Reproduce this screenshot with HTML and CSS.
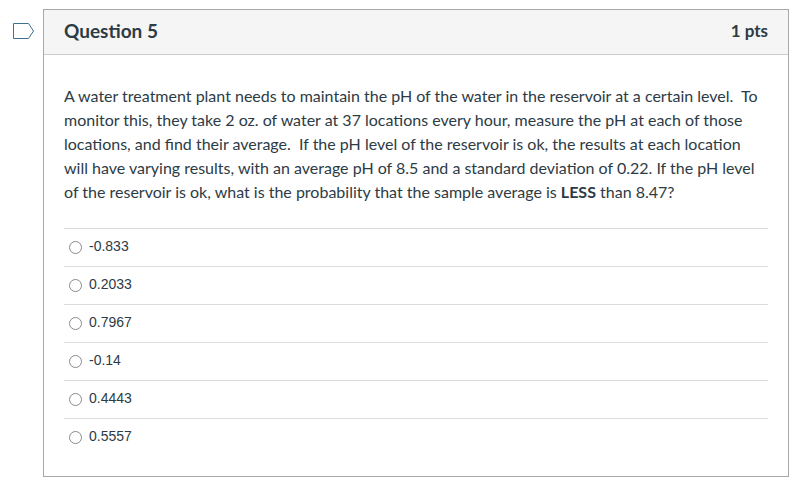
FILE: index.html
```html
<!DOCTYPE html>
<html>
<head>
<meta charset="utf-8">
<link rel="stylesheet" href="styles.css">
</head>
<body>
<div class="page">
  <div class="flag">
    <svg width="22" height="16" viewBox="0 0 22 16"><path d="M0.5 0.5 H15.5 L20.5 8 L15.5 15.5 H0.5 Z" fill="none" stroke="#3f6f8f" stroke-width="1"/></svg>
  </div>
  <div class="question">
    <div class="header">
      <span class="title">Question 5</span>
      <span class="pts">1 pts</span>
    </div>
    <div class="content">
      <p class="text">A water treatment plant needs to maintain the pH of the water in the reservoir at a certain level.&nbsp; To monitor this, they take 2 oz. of water at 37 locations every hour, measure the pH at each of those locations, and find their average.&nbsp; If the pH level of the reservoir is ok, the results at each location will have varying results, with an average pH of 8.5 and a standard deviation of 0.22. If the pH level of the reservoir is ok, what is the probability that the sample average is <strong>LESS</strong> than 8.47?</p>
      <div class="answers">
        <label class="answer"><span class="radio"></span><span class="val">-0.833</span></label>
        <label class="answer"><span class="radio"></span><span class="val">0.2033</span></label>
        <label class="answer"><span class="radio"></span><span class="val">0.7967</span></label>
        <label class="answer"><span class="radio"></span><span class="val">-0.14</span></label>
        <label class="answer"><span class="radio"></span><span class="val">0.4443</span></label>
        <label class="answer"><span class="radio"></span><span class="val">0.5557</span></label>
      </div>
    </div>
  </div>
</div>
</body>
</html>
```
FILE: styles.css
```css
html, body { margin: 0; padding: 0; background: #fff; }
body { font-family: Lato, "Open Sans", sans-serif; color: #2d3b45; }
.page { display: flex; align-items: flex-start; padding-top: 9px; }
.flag { width: 43px; padding-top: 14px; padding-left: 13px; box-sizing: border-box; flex: none; }
.flag svg { display: block; }
.question { width: 746px; border: 1px solid #a8a8a8; box-sizing: border-box; }
.header { display: flex; justify-content: space-between; align-items: center; height: 41px; padding: 0 20px 3px; background: #f5f5f5; border-bottom: 1px solid #c7cdd1; box-sizing: content-box; }
.title { font-weight: 700; font-size: 19px; color: #2d3b45; }
.pts { font-weight: 700; font-size: 17px; color: #2d3b45; }
.content { padding: 29px 20px 20px; }
.text { margin: 0 0 24px; font-size: 16px; line-height: 24px; }
.answers { border-top: 1px solid #dcdcdc; }
.answer { display: flex; align-items: center; height: 34px; padding: 0 0 3px 5px; border-bottom: 1px solid #dcdcdc; font-family: "Liberation Sans", Arial, sans-serif; font-size: 14px; color: #2d3b45; }
.answer:last-child { border-bottom: none; }
.radio { width: 11px; height: 11px; border: 1px solid #8a8a8a; border-radius: 50%; margin: 3px 7px 0 0; flex: none; }
```
